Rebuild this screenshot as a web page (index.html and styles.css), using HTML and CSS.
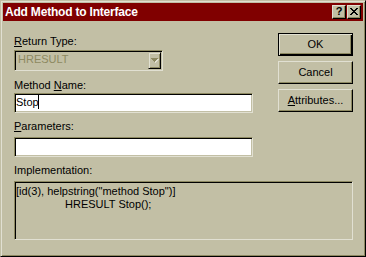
FILE: index.html
```html
<!DOCTYPE html>
<html>
<head>
<meta charset="utf-8">
<title>Add Method to Interface</title>
<link rel="stylesheet" href="styles.css">
</head>
<body>
<div class="window">
  <div class="titlebar">
    <span class="title">Add Method to Interface</span>
    <div class="caption-buttons">
      <span class="cap-btn help">?</span>
      <span class="cap-btn close"><svg width="8" height="7" viewBox="0 0 8 7" shape-rendering="crispEdges"><path fill="#000" d="M0 0h2v1H0z M6 0h2v1H6z M1 1h2v1H1z M5 1h2v1H5z M2 2h4v1H2z M3 3h2v1H3z M2 4h4v1H2z M1 5h2v1H1z M5 5h2v1H5z M0 6h2v1H0z M6 6h2v1H6z"/></svg></span>
    </div>
  </div>
  <div class="content">
    <div class="top">
      <div class="fields">
        <div class="lbl l1"><u>R</u>eturn Type:</div>
        <div class="combo">
          <span class="combo-text">HRESULT</span>
          <span class="combo-btn"><svg width="8" height="5" viewBox="0 0 8 5" shape-rendering="crispEdges"><path fill="#e1e0d2" d="M1 1h7v1H1z M2 2h5v1H2z M3 3h3v1H3z M4 4h1v1H4z"/><path fill="#8d8961" d="M0 0h7v1H0z M1 1h5v1H1z M2 2h3v1H2z M3 3h1v1H3z"/></svg></span>
        </div>
        <div class="lbl l2">Method <u>N</u>ame:</div>
        <div class="edit e1">Stop<span class="caret"></span></div>
        <div class="lbl l3"><u>P</u>arameters:</div>
        <div class="edit e2"></div>
      </div>
      <div class="buttons">
        <div class="btn default">OK</div>
        <div class="btn">Cancel</div>
        <div class="btn"><u>A</u>ttributes...</div>
      </div>
    </div>
    <div class="lbl l4">Implementation:</div>
    <div class="impl">
      <div class="impl-line">[id(3), helpstring("method Stop")]</div>
      <div class="impl-line indent">HRESULT Stop();</div>
    </div>
  </div>
</div>
</body>
</html>
```
FILE: styles.css
```css
html, body {
  margin: 0;
  padding: 0;
  background: #c2bfa5;
}
body {
  font-family: "Liberation Sans", Arial, sans-serif;
  font-size: 11px;
  line-height: 13px;
  color: #000;
}
.window {
  width: 366px;
  height: 257px;
  box-sizing: border-box;
  border: 1px solid;
  border-color: #c2bfa5 #000 #000 #c2bfa5;
  box-shadow: inset 1px 1px #e1e0d2, inset -1px -1px #8d8961;
  padding: 2px;
  background: #c2bfa5;
}
.titlebar {
  height: 18px;
  background: #800000;
  display: flex;
  align-items: center;
  justify-content: space-between;
  padding: 0 2px 0 2px;
}
.title {
  color: #fff;
  font-weight: bold;
  font-size: 12px;
  letter-spacing: -0.2px;
  line-height: 18px;
}
.caption-buttons {
  display: flex;
  gap: 1px;
}
.cap-btn {
  width: 14px;
  height: 14px;
  box-sizing: border-box;
  background: #c2bfa5;
  border: 1px solid;
  border-color: #e1e0d2 #000 #000 #e1e0d2;
  box-shadow: inset -1px -1px #8d8961;
  display: flex;
  align-items: center;
  justify-content: center;
}
.help {
  font-weight: bold;
  font-size: 11px;
  line-height: 11px;
  padding-bottom: 1px;
}
.close svg {
  display: block;
  margin-bottom: 1px;
}
.content {
  padding: 12px 10px 0 11px;
}
.top {
  display: flex;
  justify-content: space-between;
  align-items: flex-start;
}
.fields {
  width: 239px;
  display: flex;
  flex-direction: column;
}
.lbl {
  height: 13px;
  white-space: nowrap;
}
.l1 { margin-top: 2px; }
.l2 { margin-top: 8px; }
.l3 { margin-top: 7px; }
.l4 { margin-top: 7px; }
.combo {
  margin-top: 2px;
  width: 149px;
  height: 21px;
  box-sizing: border-box;
  border: 1px solid;
  border-color: #8d8961 #e1e0d2 #e1e0d2 #8d8961;
  box-shadow: inset 1px 1px #000, inset -1px -1px #c2bfa5;
  padding: 1px;
  display: flex;
  background: #c2bfa5;
}
.combo-text {
  flex: 1;
  padding: 1px 0 0 2px;
  color: #8d8961;
}
.combo-btn {
  width: 13px;
  height: 17px;
  box-sizing: border-box;
  border: 1px solid;
  border-color: #c2bfa5 #000 #000 #c2bfa5;
  box-shadow: inset 1px 1px #e1e0d2, inset -1px -1px #8d8961;
  display: flex;
  align-items: center;
  justify-content: center;
}
.combo-btn svg {
  display: block;
}
.edit {
  height: 20px;
  box-sizing: border-box;
  border: 1px solid;
  border-color: #8d8961 #e1e0d2 #e1e0d2 #8d8961;
  box-shadow: inset 1px 1px #000, inset -1px -1px #c2bfa5;
  background: #fff;
  padding: 1px 1px 0 1px;
  white-space: nowrap;
}
.e1 { margin-top: 1px; }
.e2 { margin-top: 4px; }
.caret {
  display: inline-block;
  width: 1px;
  height: 14px;
  background: #000;
  vertical-align: -3px;
  margin-left: -1px;
}
.buttons {
  width: 75px;
  display: flex;
  flex-direction: column;
  gap: 5px;
}
.btn {
  height: 23px;
  box-sizing: border-box;
  border: 1px solid;
  border-color: #e1e0d2 #000 #000 #e1e0d2;
  box-shadow: inset -1px -1px #8d8961;
  display: flex;
  align-items: center;
  justify-content: center;
  padding-bottom: 1px;
  white-space: nowrap;
}
.btn.default {
  border-color: #000;
  box-shadow: inset 1px 1px #e1e0d2, inset -1px -1px #000, inset -2px -2px #8d8961;
}
.impl {
  margin-top: 4px;
  height: 59px;
  box-sizing: border-box;
  border: 1px solid;
  border-color: #8d8961 #e1e0d2 #e1e0d2 #8d8961;
  box-shadow: inset 1px 1px #000, inset -1px -1px #c2bfa5;
  background: #c2bfa5;
  padding: 3px 1px 0 1px;
}
.impl-line {
  height: 13px;
  white-space: nowrap;
}
.indent {
  padding-left: 49px;
}
```
